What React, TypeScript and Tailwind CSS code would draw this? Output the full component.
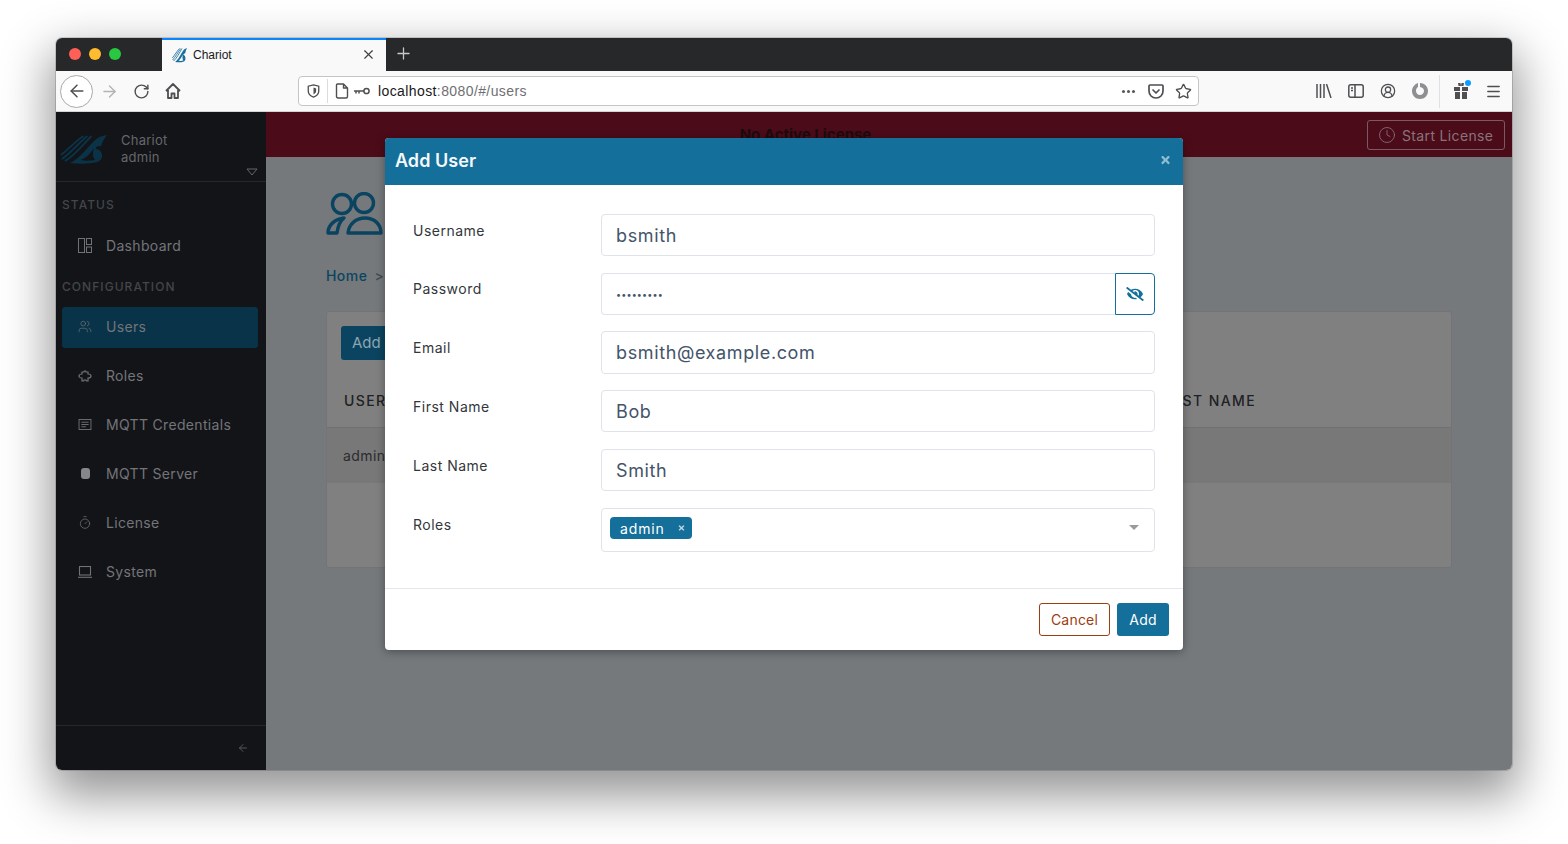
import { ArrowLeft, ArrowRight, RotateCw, X, Plus, Star, Menu, CircleUserRound, Clock, Timer, Users } from "lucide-react";
import { FaEyeSlash, FaTimes } from "react-icons/fa";
import type { ReactNode } from "react";

const sans = "font-['Inter','Liberation_Sans',sans-serif]";

/* Chariot swoosh, used in the tab and (dimmed) in the sidebar */
function ChariotLogo({ className, color, cut }: { className: string; color: string; cut: string }) {
  return (
    <svg viewBox="0 0 48 32" preserveAspectRatio="none" className={className} fill="none" stroke={color}>
      <path d="M1 22C9 16 16 8 24 3" strokeWidth="2" />
      <path d="M2 26C11 20 19 10 28 3" strokeWidth="2" />
      <path d="M5 28C15 23 23 12 32 3" strokeWidth="2" />
      <path d="M10 30C20 26 28 14 36 7C39 4 43 3 48 2C45 6 43 9 42 13C38 13 36 14 37 16C40 16 43 19 43 23C43 26 41 28 38 29C30 31 20 31 10 30Z" fill={color} stroke="none" />
      <path d="M35 15C33 19 33 24 36 27C30 28 25 28 21 27C27 25 31 20 35 15Z" fill={cut} stroke="none" />
    </svg>
  );
}

function UsersGlyph({ className, color }: { className: string; color: string }) {
  return (
    <svg viewBox="0 0 57 44" className={className} fill="none" stroke={color} strokeWidth="3.4">
      <circle cx="16" cy="12" r="9.5" />
      <circle cx="38" cy="11" r="9.5" />
      <path d="M2 41C2 33 9 27 18 26C13 30 12 35 11 41Z" strokeLinejoin="round" />
      <path d="M22 41C23 32 30 26 39 26C48 26 55 32 55 41Z" strokeLinejoin="round" />
    </svg>
  );
}

function SideItem({ label, icon, active }: { label: string; icon: ReactNode; active?: boolean }) {
  return (
    <div className={`ml-[6px] mr-[8px] flex h-[41px] items-center rounded-[3px] pb-[2px] pl-[16px] ${active ? "bg-[#093349]" : ""}`}>
      <span className="flex w-[14px] justify-center text-[#707275]">{icon}</span>
      <span className="ml-[14px] text-[14px] tracking-[0.32px] text-[#737578]">{label}</span>
    </div>
  );
}

function SideLabel({ children }: { children: string }) {
  return <div className="px-[6px] text-[12px] font-medium tracking-[1.05px] text-[#43464a]">{children}</div>;
}

function Field({ label, value, className }: { label: string; value: string; className: string }) {
  return (
    <div className={`flex ${className}`}>
      <div className="w-[188px] pt-[6px] text-[14px] tracking-[0.5px] text-[#33373b]">{label}</div>
      <div className="flex h-full w-[554px] items-center rounded-[4px] border border-[#dfe3e9] px-[14px] text-[18px] tracking-[0.62px] text-[#44546a]">
        {value}
      </div>
    </div>
  );
}

export default function App() {
  return (
    <div className={`h-[844px] w-[1568px] overflow-hidden bg-white pl-[56px] pt-[38px] ${sans}`}>
      <div className="relative flex h-[732px] w-[1456px] flex-col overflow-hidden rounded-[6px] shadow-[0_0_0_1px_rgba(0,0,0,0.15),0_20px_48px_6px_rgba(0,0,0,0.42)]">
        {/* Tab strip */}
        <div className="flex h-[33px] shrink-0 bg-[#27282a]">
          <div className="flex w-[106px] items-center gap-[8px] pb-[1px] pl-[13px]">
            <span className="h-[12px] w-[12px] rounded-full bg-[#fe5f57]" />
            <span className="h-[12px] w-[12px] rounded-full bg-[#febc2e]" />
            <span className="h-[12px] w-[12px] rounded-full bg-[#28c840]" />
          </div>
          <div className="flex w-[224px] items-center border-t-2 border-[#0a84ff] bg-[#f9f9fa] pb-[2px] pl-[10px] pr-[10px]">
            <ChariotLogo className="h-[16px] w-[15px]" color="#1a6f9b" cut="#f9f9fa" />
            <span className="ml-[6px] font-['Liberation_Sans'] text-[12px] text-[#18181a]">Chariot</span>
            <X className="ml-auto h-[15px] w-[15px] text-[#3c3c3e]" strokeWidth={1.8} />
          </div>
          <div className="flex w-[34px] items-center justify-center pb-[2px]">
            <Plus className="h-[19px] w-[19px] text-[#c8c8ca]" strokeWidth={1.6} />
          </div>
        </div>

        {/* Navigation toolbar */}
        <div className="flex h-[41px] shrink-0 items-center border-b border-[#d4d4d6] bg-[#f9f9fa] text-[#4f4f52]">
          <div className="ml-[4px] flex h-[33px] w-[33px] items-center justify-center rounded-full border border-[#a9a9ab] bg-white">
            <ArrowLeft className="h-[20px] w-[20px]" strokeWidth={1.8} />
          </div>
          <ArrowRight className="ml-[7px] h-[19px] w-[19px] text-[#b3b3b5]" strokeWidth={1.8} />
          <RotateCw className="ml-[14px] h-[17px] w-[17px]" strokeWidth={2} />
          <svg viewBox="0 0 18 18" className="ml-[14px] h-[18px] w-[18px]" fill="none" stroke="currentColor" strokeWidth="1.8" strokeLinejoin="round">
            <path d="M2 9L9 2L16 9M4 8V16H7.5V11.5H10.5V16H14V8" />
          </svg>

          <div className="ml-[116px] flex h-[30px] w-[901px] items-center rounded-[4px] border border-[#c5c5c7] bg-white">
            <svg viewBox="0 0 14 16" className="ml-[8px] h-[14px] w-[13px]" fill="none" stroke="currentColor" strokeWidth="1.5">
              <path d="M7 1L13 2.5V8C13 11.5 10 14 7 15C4 14 1 11.5 1 8V2.5Z" />
              <path d="M7 4L10 5V8C10 10 8.5 11 7 12Z" fill="currentColor" stroke="none" />
            </svg>
            <span className="ml-[7px] h-[24px] w-px bg-[#dcdcde]" />
            <svg viewBox="0 0 14 16" className="ml-[7px] h-[16px] w-[14px]" fill="none" stroke="currentColor" strokeWidth="1.4">
              <path d="M2.5 1H8.5L12.5 5V13.5C12.5 14.3 12 15 11 15H3C2 15 1.5 14.3 1.5 13.5V2C1.5 1.4 2 1 2.5 1ZM8.5 1V5H12.5" strokeLinejoin="round" />
            </svg>
            <svg viewBox="0 0 16 8" className="ml-[5px] h-[8px] w-[16px]" fill="none" stroke="currentColor" strokeWidth="1.5">
              <circle cx="12.5" cy="4" r="2.6" />
              <path d="M0 4H10M2 4V6.5M5 4V6.5" />
            </svg>
            <span className="ml-[8px] pt-[1px] font-['Liberation_Sans'] text-[14px] tracking-[0.4px] text-[#18181a]">
              localhost<span className="text-[#6f6f72]">:8080/#/users</span>
            </span>
            <span className="ml-auto flex gap-[2px]">
              <span className="h-[3px] w-[3px] rounded-full bg-[#57575a]" />
              <span className="h-[3px] w-[3px] rounded-full bg-[#57575a]" />
              <span className="h-[3px] w-[3px] rounded-full bg-[#57575a]" />
            </span>
            <svg viewBox="0 0 16 15" className="ml-[13px] h-[15px] w-[16px]" fill="none" stroke="currentColor" strokeWidth="1.7" strokeLinejoin="round" strokeLinecap="round">
              <path d="M2 1H14C14.6 1 15 1.4 15 2V7C15 11 12 14 8 14C4 14 1 11 1 7V2C1 1.4 1.4 1 2 1Z" />
              <path d="M5 6L8 9L11 6" />
            </svg>
            <Star className="ml-[11px] mr-[6px] h-[17px] w-[17px]" strokeWidth={1.9} />
          </div>

          <svg viewBox="0 0 16 14" className="ml-[117px] h-[14px] w-[16px]" stroke="currentColor" strokeWidth="1.5" fill="none">
            <path d="M1 0V14M4.5 0V14M8 0V14M10.5 0L15 14" />
          </svg>
          <svg viewBox="0 0 16 14" className="ml-[16px] h-[14px] w-[16px]" fill="none" stroke="currentColor" strokeWidth="1.5">
            <rect x="0.8" y="0.8" width="14.4" height="12.4" rx="2" />
            <path d="M7 1V13M3 4H5M3 6.5H5" />
          </svg>
          <CircleUserRound className="ml-[16px] h-[16px] w-[16px]" strokeWidth={1.9} />
          <svg viewBox="0 0 16 16" className="ml-[16px] h-[16px] w-[16px]">
            <path d="M8 0C13 0 16 4 16 8C16 12.5 12.5 16 8 16C3.5 16 0 12.5 0 8C0 4 3 1 6 0L6 4C4.5 5 4 6.5 4 8C4 10.2 5.8 12 8 12C10.2 12 12 10.2 12 8C12 6 10.5 4.3 8 4Z" fill="#8f8f92" />
          </svg>
          <span className="ml-[11px] h-[33px] w-px bg-[#e0e0e2]" />
          <span className="relative ml-[14px] h-[16px] w-[14px]">
            <svg viewBox="0 0 14 16" className="h-[16px] w-[14px]" fill="currentColor">
              <path d="M0 4H6V8H0ZM8 4H14V8H8ZM1 9H6V16H1ZM8 9H13V16H8ZM4 0H6.5L7 3H4.5ZM7.5 0H10L9.5 3H7Z" />
            </svg>
            <span className="absolute right-[-3px] top-[-3px] h-[6px] w-[6px] rounded-full bg-[#0a9dff]" />
          </span>
          <Menu className="ml-[17px] h-[17px] w-[17px]" strokeWidth={2} />
        </div>

        {/* Application */}
        <div className="flex min-h-0 flex-1 text-[#202124]">
          <aside className="flex w-[210px] shrink-0 flex-col bg-[#131418]">
            <div className="relative h-[70px] border-b border-[#26282c]">
              <div className="flex items-center pl-[4px] pt-[20px]">
                <ChariotLogo className="h-[32px] w-[47px]" color="#0b3347" cut="#131418" />
                <div className="ml-[14px] text-[13px] leading-[17px] tracking-[0.25px] text-[#65676a]">
                  <div>Chariot</div>
                  <div>admin</div>
                </div>
              </div>
              <svg viewBox="0 0 12 8" className="absolute bottom-[5px] right-[8px] h-[8px] w-[12px]" fill="none" stroke="#65676a">
                <path d="M1 1H11L6 7Z" />
              </svg>
            </div>
            <div className="pt-[14px]">
              <SideLabel>STATUS</SideLabel>
            </div>
            <div className="mt-[12px]">
              <SideItem
                label="Dashboard"
                icon={
                  <svg viewBox="0 0 14 15" className="h-[15px] w-[14px]" fill="none" stroke="currentColor" strokeWidth="1">
                    <rect x="0.5" y="0.5" width="6" height="14" />
                    <rect x="8.5" y="0.5" width="5" height="6" />
                    <rect x="8.5" y="9" width="5" height="5.5" />
                  </svg>
                }
              />
            </div>
            <div className="mt-[11px]">
              <SideLabel>CONFIGURATION</SideLabel>
            </div>
            <div className="mt-[11px] flex flex-col gap-[8px]">
              <SideItem label="Users" active icon={<Users className="h-[15px] w-[15px]" strokeWidth={1.2} />} />
              <SideItem
                label="Roles"
                icon={
                  <svg viewBox="0 0 14 14" className="h-[14px] w-[14px]" fill="none" stroke="currentColor" strokeWidth="1.2">
                    <path d="M4 3H6C6 1.5 8 1.5 8 3H10V5C12 5 13 6 13 7C13 8 12 9 10 9V12H8.5C8.5 10.5 5.5 10.5 5.5 12H4V9C2 9 1 8 1 7C1 6 2 5 4 5Z" />
                  </svg>
                }
              />
              <SideItem
                label="MQTT Credentials"
                icon={
                  <svg viewBox="0 0 14 12" className="h-[11px] w-[14px]" fill="none" stroke="currentColor" strokeWidth="1">
                    <rect x="0.5" y="0.5" width="13" height="11" />
                    <path d="M3 3.5H11M3 6H11M3 8.5H8" />
                  </svg>
                }
              />
              <SideItem
                label="MQTT Server"
                icon={<span className="h-[11px] w-[9px] rounded-[3px] bg-[#85878a]" />}
              />
              <SideItem label="License" icon={<Timer className="h-[15px] w-[15px]" strokeWidth={1.3} />} />
              <SideItem
                label="System"
                icon={
                  <svg viewBox="0 0 14 12" className="h-[12px] w-[14px]" fill="none" stroke="currentColor" strokeWidth="1.1">
                    <rect x="1.5" y="0.5" width="11" height="8.5" />
                    <path d="M0 11.3H14" />
                  </svg>
                }
              />
            </div>
            <div className="mt-auto flex h-[45px] items-center justify-end border-t border-[#26282c] pr-[17px]">
              <ArrowLeft className="h-[12px] w-[12px] text-[#626467]" strokeWidth={1.6} />
            </div>
          </aside>

          <main className="flex min-w-0 flex-1 flex-col bg-[#75797c]">
            <div className="flex h-[45px] shrink-0 items-start bg-[#4c0b19]">
              <div className="flex-1 pr-[22px] pt-[12px] text-center text-[15px] font-bold tracking-[0px] text-[#1c0a0e]">
                No Active License
              </div>
              <div className="mr-[7px] mt-[8px] flex h-[30px] w-[138px] items-center rounded-[3px] border border-[#7c5a63] pl-[10px] text-[14px] tracking-[0.35px] text-[#87757a]">
                <Clock className="h-[18px] w-[18px]" strokeWidth={1.1} />
                <span className="ml-[6px]">Start License</span>
              </div>
            </div>
            <div className="px-[60px]">
              <UsersGlyph className="mt-[35px] h-[44px] w-[57px]" color="#0b4460" />
              <div className="mt-[29px] text-[14px] font-medium tracking-[0.45px] text-[#0b4460]">
                Home <span className="ml-[3px] text-[#3e4a52]">&gt;</span>
              </div>
              <div className="mt-[25px] h-[257px] w-[1126px] rounded-[3px] border border-[#727477] bg-[#808080]">
                <div className="ml-[14px] mt-[14px] flex h-[34px] w-[60px] items-center rounded-[3px] bg-[#0b4460] pl-[11px] text-[15px] text-[#8da5b0]">
                  Add
                </div>
                <div className="mt-[14px] flex h-[54px] items-center justify-between border-b border-[#707075] pl-[17px] pr-[195px] text-[14px] font-medium tracking-[1.4px] text-[#202124]">
                  <span>USERNAME</span>
                  <span>LAST NAME</span>
                </div>
                <div className="flex h-[55px] items-center bg-[#787878] pl-[16px] text-[14px] tracking-[0.4px] text-[#2c2c2e]">
                  admin
                </div>
              </div>
            </div>
          </main>
        </div>

        {/* Add User dialog */}
        <div className="absolute left-[329px] top-[100px] flex h-[512px] w-[798px] flex-col overflow-hidden rounded-[4px] bg-white shadow-[0_2px_8px_rgba(0,0,0,0.35)]">
          <div className="flex h-[47px] shrink-0 items-center justify-between bg-[#146f9a] pb-[2px] pl-[10px] pr-[12px]">
            <span className="text-[18px] font-semibold tracking-[0.05px] text-[#f4f8fa]">Add User</span>
            <FaTimes className="mb-[2px] h-[12px] w-[11px] text-[#8fbdd2]" />
          </div>
          <div className="flex-1 pl-[28px] pt-[29px]">
            <Field label="Username" value="bsmith" className="h-[42px]" />
            <div className="mt-[17px] flex h-[42px]">
              <div className="w-[188px] pt-[5px] text-[14px] tracking-[0.5px] text-[#33373b]">Password</div>
              <div className="flex h-full w-[514px] items-center rounded-l-[4px] border border-r-0 border-[#dfe3e9] px-[14px] pt-[2px] text-[9px] tracking-[0.15px] text-[#44546a]">
                •••••••••
              </div>
              <div className="flex h-full w-[40px] items-center justify-center rounded-r-[4px] border border-[#146f9a]">
                <FaEyeSlash className="h-[14px] w-[18px] text-[#146f9a]" />
              </div>
            </div>
            <Field label="Email" value="bsmith@example.com" className="mt-[16px] h-[43px]" />
            <Field label="First Name" value="Bob" className="mt-[16px] h-[42px]" />
            <Field label="Last Name" value="Smith" className="mt-[17px] h-[42px]" />
            <div className="mt-[17px] flex h-[44px]">
              <div className="w-[188px] pt-[6px] text-[14px] tracking-[0.5px] text-[#33373b]">Roles</div>
              <div className="flex h-full w-[554px] items-start rounded-[4px] border border-[#dfe3e9] pl-[8px] pr-[15px] pt-[8px]">
                <span className="flex h-[22px] w-[82px] items-center rounded-[4px] bg-[#146f9a] pl-[10px] text-[14px] tracking-[0.85px] text-white">
                  admin
                  <FaTimes className="ml-auto mr-[7px] h-[8px] w-[7px] text-[#b9d4e1]" />
                </span>
                <span className="ml-auto mt-[8px] h-0 w-0 border-x-[5px] border-t-[5px] border-x-transparent border-t-[#9a9a9d]" />
              </div>
            </div>
          </div>
          <div className="flex h-[62px] shrink-0 items-start justify-end gap-[7px] border-t border-[#e3e6ea] pr-[14px] pt-[14px]">
            <div className="flex h-[33px] w-[71px] items-center justify-center rounded-[3px] border border-[#9c3d10] text-[14px] tracking-[0.2px] text-[#9c3d10]">
              Cancel
            </div>
            <div className="flex h-[33px] w-[52px] items-center justify-center rounded-[3px] bg-[#146f9a] text-[14px] tracking-[0.2px] text-white">
              Add
            </div>
          </div>
        </div>
      </div>
    </div>
  );
}
